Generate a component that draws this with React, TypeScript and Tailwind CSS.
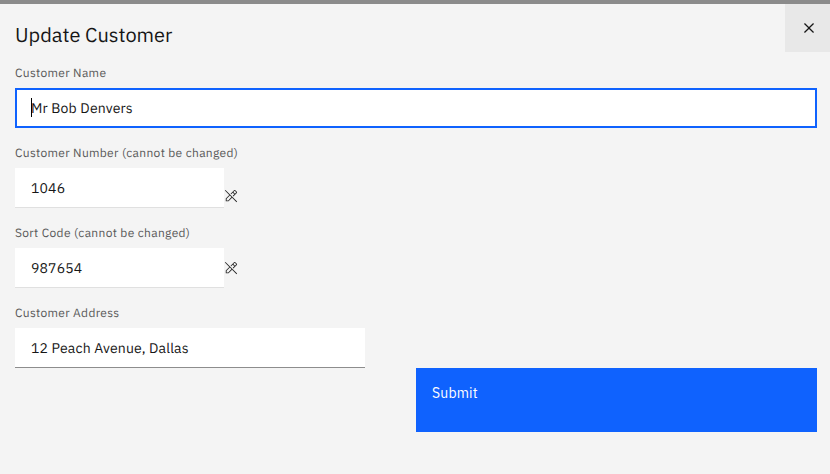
import type { ReactNode } from 'react';

function EditOff() {
  return (
    <svg width="14" height="14" viewBox="0 0 32 32" fill="#262626" aria-hidden="true">
      <path d="M30 28.6L3.4 2 2 3.4l10.1 10.1L4 21.6V28h6.4l8.1-8.1L28.6 30 30 28.6zM9.6 26H6v-3.6l7.5-7.5 3.6 3.6L9.6 26zM29.4 6.2l-3.6-3.6c-.8-.8-2-.8-2.8 0l-8 8 1.4 1.4L20 8.4l3.6 3.6L20 15.6l1.4 1.4 8-8C30.2 8.2 30.2 7 29.4 6.2zM25 10.6L21.4 7l3-3L28 7.6 25 10.6z" />
    </svg>
  );
}

function Label({ children }: { children: ReactNode }) {
  return (
    <div className="flex h-4 items-center text-[12px] leading-4 tracking-[0.32px] whitespace-nowrap text-[#5a5a5a]">
      <span>{children}</span>
    </div>
  );
}

export default function App() {
  return (
    <main className="flex h-[474px] w-[830px] flex-col overflow-hidden border-t-4 border-[#8b8b8b] bg-[#f4f4f4] font-['IBM_Plex_Sans',Roboto,sans-serif] text-[#161616] [text-rendering:geometricPrecision]">
      <header className="flex h-12 justify-between pl-[15px]">
        <h1 className="mt-[17px] text-[20px] leading-7">Update Customer</h1>
        <button aria-label="Close" className="flex h-12 w-[45px] items-center bg-[#e8e8e8] pl-[14px]">
          <svg width="20" height="20" viewBox="0 0 32 32" fill="#161616">
            <path d="M17.4141 16L24 9.4141 22.5859 8 16 14.5859 9.4143 8 8 9.4141 14.5859 16 8 22.5859 9.4143 24 16 17.4141 22.5859 24 24 22.5859 17.4141 16z" />
          </svg>
        </button>
      </header>
      <form className="flex flex-col pt-[14px] pr-[13px] pl-[15px] text-[14px] leading-[18px] tracking-[0.16px]">
        <Label>Customer Name</Label>
        <div className="mt-[6px] flex h-10 items-center border-2 border-[#0f62fe] bg-white pl-[14px]">
          <span className="mb-px h-[19px] w-px bg-black" />
          <span className="-ml-px">Mr Bob Denvers</span>
        </div>

        <div className="mt-[18px]">
          <Label>Customer Number (cannot be changed)</Label>
        </div>
        <div className="mt-[6px] flex h-10">
          <div className="flex w-[209px] items-center border-b border-[#e0e0e0] bg-white pl-4">1046</div>
          <div className="pt-[21px]"><EditOff /></div>
        </div>

        <div className="mt-[18px]">
          <Label>Sort Code (cannot be changed)</Label>
        </div>
        <div className="mt-[6px] flex h-10">
          <div className="flex w-[209px] items-center border-b border-[#e0e0e0] bg-white pl-4">987654</div>
          <div className="pt-[13px]"><EditOff /></div>
        </div>

        <div className="mt-[18px]">
          <Label>Customer Address</Label>
        </div>
        <div className="mt-[6px] flex h-10 w-[350px] items-center border-b border-[#8d8d8d] bg-white pl-4">
          12 Peach Avenue, Dallas
        </div>
        <button type="button" className="flex h-16 w-[401px] items-start self-end bg-[#0f62fe] pt-4 pl-4 text-white">
          Submit
        </button>
      </form>
    </main>
  );
}
